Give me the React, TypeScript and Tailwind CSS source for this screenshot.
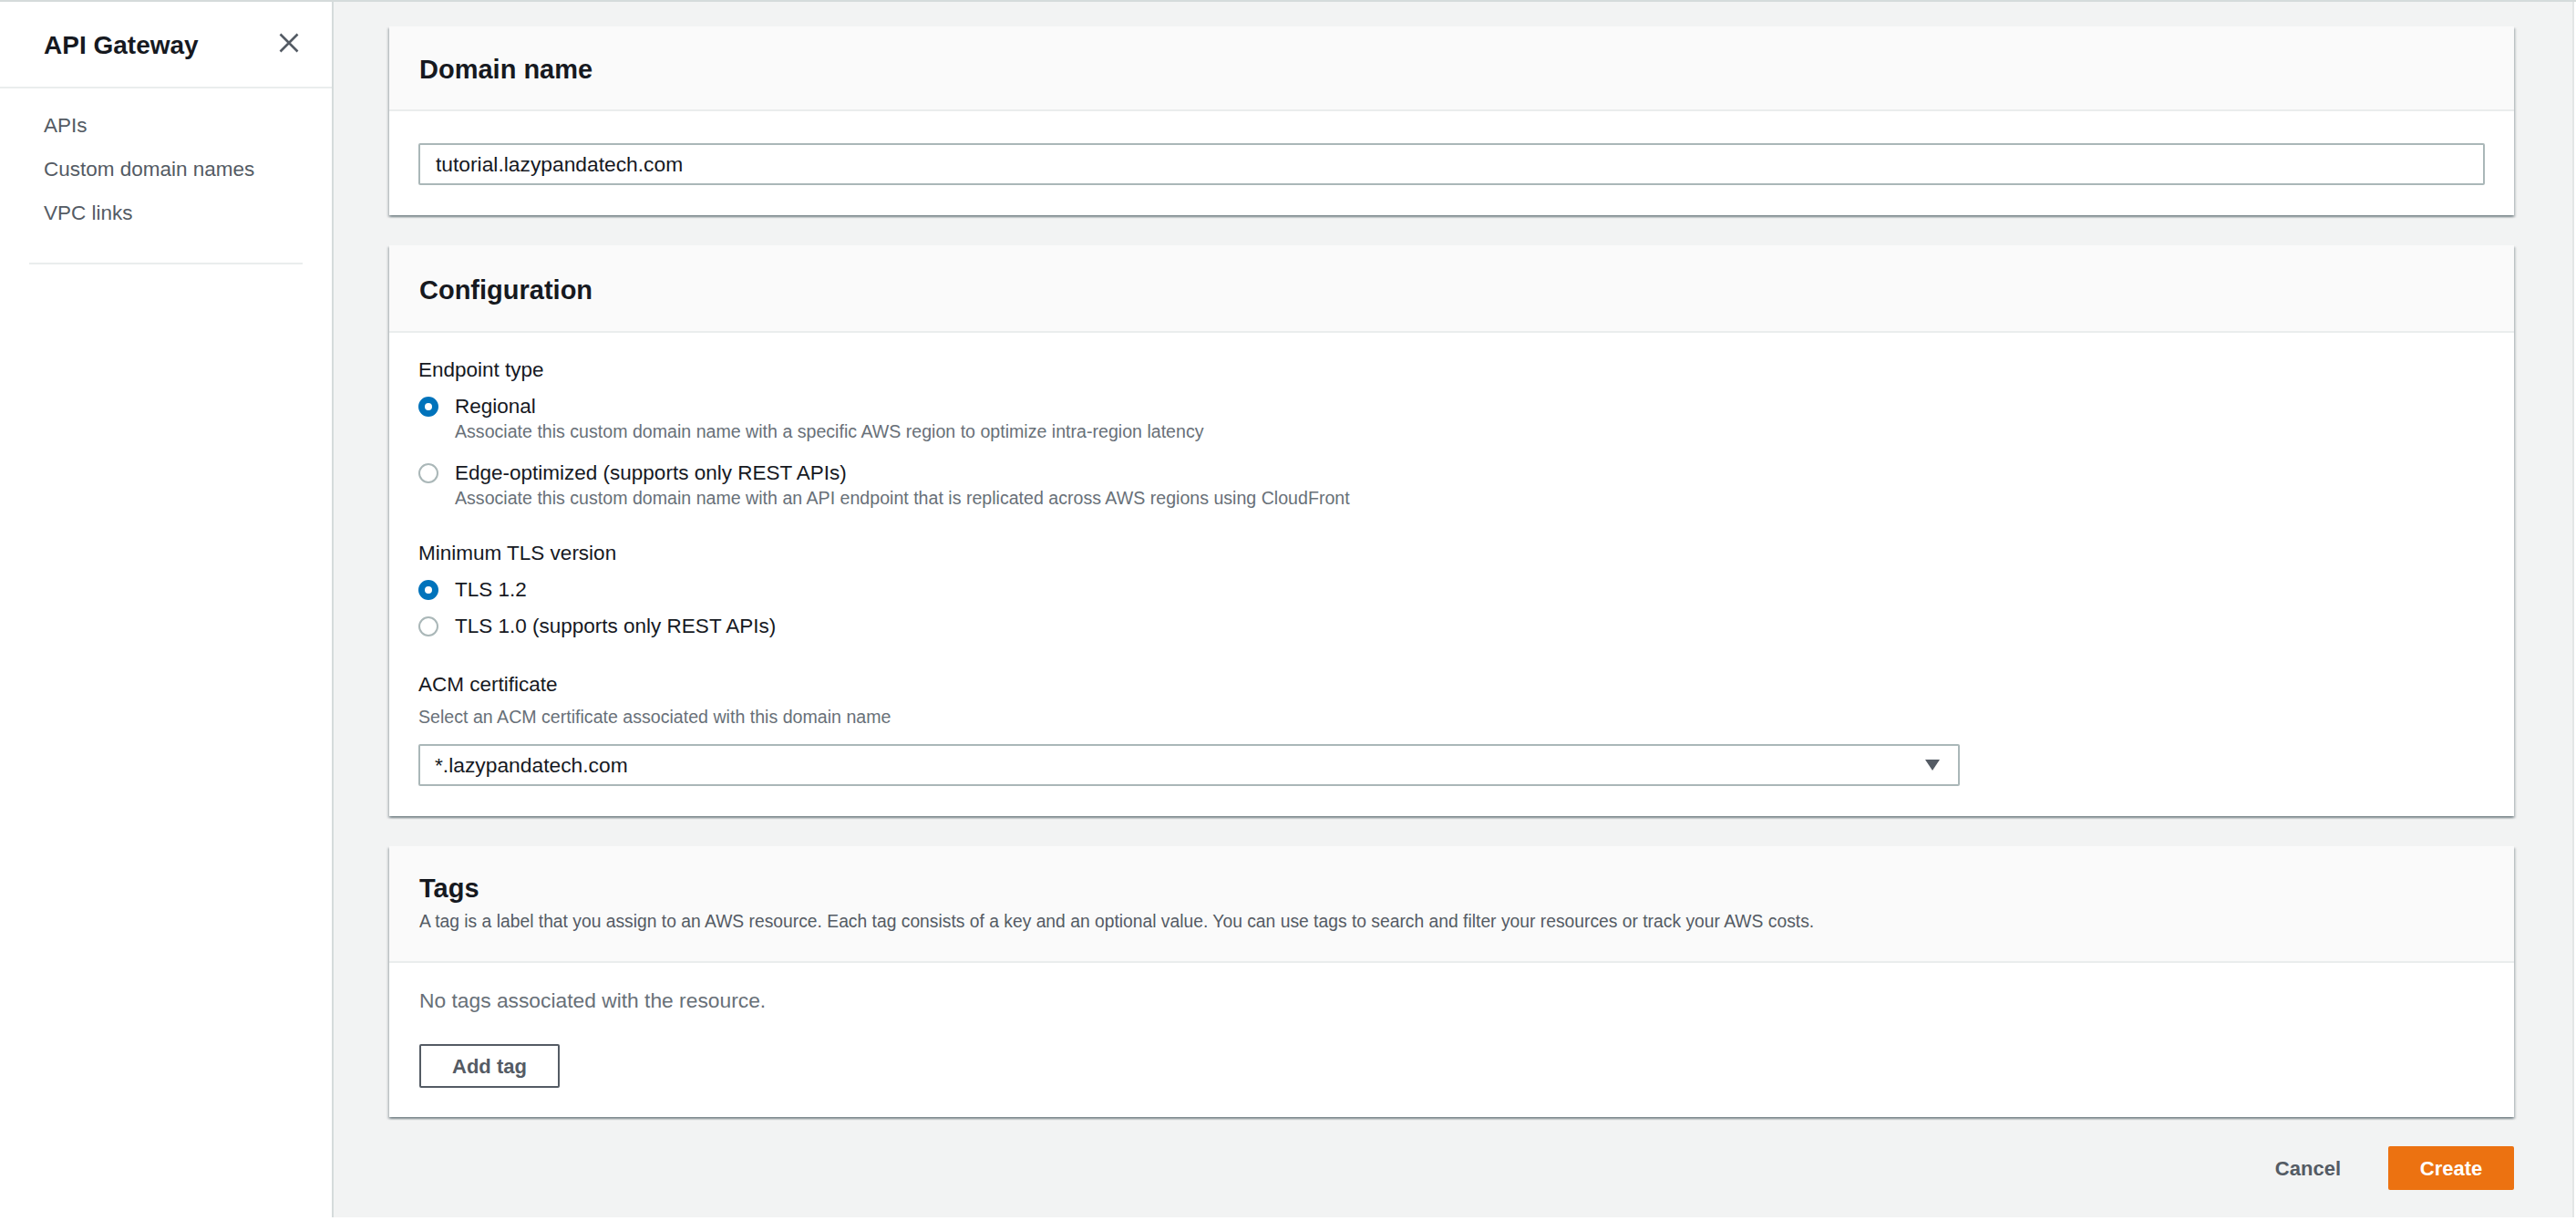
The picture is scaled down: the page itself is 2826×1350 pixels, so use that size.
const cardShadow =
  "shadow-[0_2px_2px_0_rgba(0,28,36,0.3),2px_2px_2px_0_rgba(0,28,36,0.15),-2px_2px_2px_0_rgba(0,28,36,0.15)]";

function Radio({ checked }: { checked?: boolean }) {
  if (checked) {
    return (
      <span className="box-border h-[22px] w-[22px] shrink-0 rounded-full border-[7px] border-[#0073bb] bg-white" />
    );
  }
  return (
    <span className="box-border h-[22px] w-[22px] shrink-0 rounded-full border-2 border-[#aab7b8] bg-white" />
  );
}

function Option({
  label,
  desc,
  checked,
  className = "",
}: {
  label: string;
  desc?: string;
  checked?: boolean;
  className?: string;
}) {
  return (
    <div className={className}>
      <div className="flex h-[30px] items-center gap-[18px]">
        <Radio checked={checked} />
        <span className="text-[22.5px] leading-[30px] text-[#16191f]">{label}</span>
      </div>
      {desc && (
        <p className="pl-[40px] text-[19.6px] leading-[24px] text-[#687078]">{desc}</p>
      )}
    </div>
  );
}

export default function App() {
  return (
    <div className="h-[1350px] w-[2826px] overflow-hidden bg-white font-['Liberation_Sans',Arial,sans-serif]">
      <div className="flex h-[1335px] border-t-2 border-[#d5dbdb] pr-[2px]">
        {/* side navigation */}
        <aside className="w-[366px] shrink-0 border-r-2 border-[#d5dbdb] bg-white">
          <div className="flex h-[95px] items-start justify-between border-b-2 border-[#eaeded] pl-[48px] pr-[36px] pt-[30px]">
            <h1 className="text-[28px] font-bold leading-[36px] text-[#16191f]">API Gateway</h1>
            <svg width="22" height="22" viewBox="0 0 22 22" className="mt-[4px] text-[#545b64]">
              <path d="M1.5 1.5 L20.5 20.5 M20.5 1.5 L1.5 20.5" stroke="currentColor" strokeWidth="2.6" fill="none" />
            </svg>
          </div>
          <nav className="pl-[48px] pt-[17px]">
            <a className="block text-[22.5px] leading-[48px] text-[#545b64]">APIs</a>
            <a className="block text-[22.5px] leading-[48px] text-[#545b64]">Custom domain names</a>
            <a className="block text-[22.5px] leading-[48px] text-[#545b64]">VPC links</a>
          </nav>
          <div className="mx-[32px] mt-[30px] h-[2px] bg-[#eaeded]" />
        </aside>

        {/* main content */}
        <main className="flex-1 border-r-2 border-[#e3e6e6] bg-[#f2f3f3] pl-[61px] pr-[64px] pt-[27px]">
          {/* Domain name */}
          <section className={`bg-white ${cardShadow}`}>
            <div className="h-[93px] border-b-2 border-[#eaeded] bg-[#fafafa] px-[33px] pt-[29px]">
              <h2 className="text-[29px] font-bold leading-[36px] text-[#16191f]">Domain name</h2>
            </div>
            <div className="px-[32px] pb-[33px] pt-[35px]">
              <div className="flex h-[46px] items-center rounded-[2px] border-2 border-[#aab7b8] px-[17px] text-[22.8px] text-[#16191f]">
                tutorial.lazypandatech.com
              </div>
            </div>
          </section>

          {/* Configuration */}
          <section className={`mt-[33px] bg-white ${cardShadow}`}>
            <div className="h-[96px] border-b-2 border-[#eaeded] bg-[#fafafa] px-[33px] pt-[31px]">
              <h2 className="text-[29px] font-bold leading-[36px] text-[#16191f]">Configuration</h2>
            </div>
            <div className="px-[32px] pb-[33px] pt-[26px]">
              <p className="text-[22.5px] leading-[30px] text-[#16191f]">Endpoint type</p>
              <Option
                className="mt-[10px]"
                checked
                label="Regional"
                desc="Associate this custom domain name with a specific AWS region to optimize intra-region latency"
              />
              <Option
                className="mt-[19px]"
                label="Edge-optimized (supports only REST APIs)"
                desc="Associate this custom domain name with an API endpoint that is replicated across AWS regions using CloudFront"
              />

              <p className="mt-[34px] text-[22.5px] leading-[30px] text-[#16191f]">Minimum TLS version</p>
              <Option className="mt-[10px]" checked label="TLS 1.2" />
              <Option className="mt-[10px]" label="TLS 1.0 (supports only REST APIs)" />

              <p className="mt-[34px] text-[22.5px] leading-[30px] text-[#16191f]">ACM certificate</p>
              <p className="mt-[8px] text-[19.6px] leading-[24px] text-[#687078]">
                Select an ACM certificate associated with this domain name
              </p>
              <div className="mt-[18px] flex h-[46px] w-[1691px] items-center justify-between rounded-[2px] border-2 border-[#aab7b8] pl-[16px] pr-[20px] text-[22.8px] text-[#16191f]">
                <span>*.lazypandatech.com</span>
                <svg width="16" height="12" viewBox="0 0 16 12" className="text-[#545b64]">
                  <path d="M0 0 H16 L8 12 Z" fill="currentColor" />
                </svg>
              </div>
            </div>
          </section>

          {/* Tags */}
          <section className={`mt-[33px] bg-white ${cardShadow}`}>
            <div className="h-[128px] border-b-2 border-[#eaeded] bg-[#fafafa] px-[33px] pt-[28px]">
              <h2 className="text-[29px] font-bold leading-[36px] text-[#16191f]">Tags</h2>
              <p className="mt-[7px] text-[19.3px] leading-[24px] text-[#545b64]">
                A tag is a label that you assign to an AWS resource. Each tag consists of a key and an optional value. You can use tags to search and filter your resources or track your AWS costs.
              </p>
            </div>
            <div className="px-[33px] pb-[32px] pt-[26px]">
              <p className="text-[22.8px] leading-[30px] text-[#687078]">No tags associated with the resource.</p>
              <button className="mt-[33px] h-[48px] w-[154px] rounded-[2px] border-2 border-[#545b64] bg-white text-[22px] font-bold text-[#545b64]">
                Add tag
              </button>
            </div>
          </section>

          {/* actions */}
          <div className="mt-[32px] flex justify-end gap-[18px]">
            <button className="h-[48px] px-[34px] text-[22px] font-bold text-[#545b64]">Cancel</button>
            <button className="h-[48px] w-[138px] rounded-[2px] bg-[#ec7211] text-[22px] font-bold text-white">
              Create
            </button>
          </div>
        </main>
      </div>
    </div>
  );
}
